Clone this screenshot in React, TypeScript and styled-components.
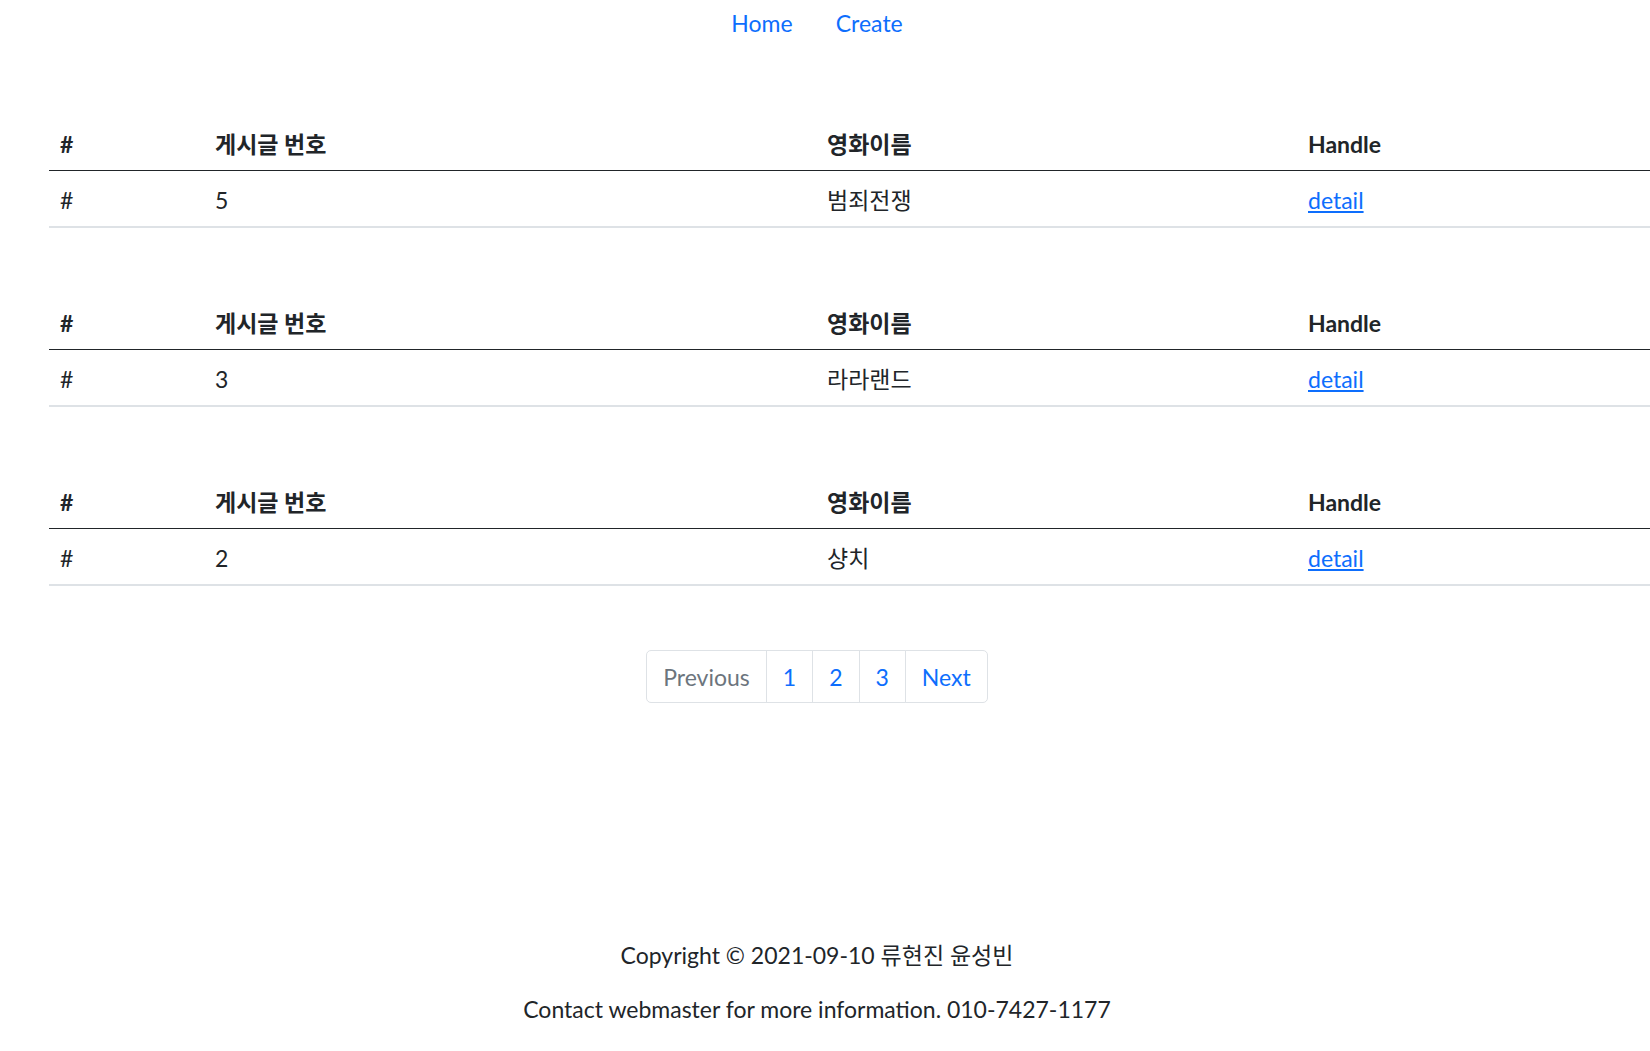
import * as React from 'react';
import styled, { createGlobalStyle } from 'styled-components';

const GlobalStyle = createGlobalStyle`
    *, *::before, *::after {
        box-sizing: border-box;
    }
    body {
        margin: 0;
        background: #fff;
        color: #212529;
        font-family: Lato, "Noto Sans CJK KR", sans-serif;
        font-size: 23px;
        overflow-x: hidden;
    }
`;

const Page = styled.div`
    display: flex;
    flex-direction: column;
    min-height: 1051px;
`;

const Nav = styled.nav`
    display: flex;
    justify-content: center;
    width: calc(100% - 16px);
`;

const NavLink = styled.a`
    padding: 7px 21.6px 11px;
    line-height: 32px;
    color: #0d6efd;
    text-decoration: none;
`;

const Board = styled.div`
    display: flex;
    flex-direction: column;
    gap: 65px;
    margin-top: 64px;
    padding-left: 49px;
`;

const Table = styled.table`
    width: 1700px;
    border-collapse: collapse;
    table-layout: fixed;
`;

const Th = styled.th<{ $w?: number }>`
    width: ${(p) => (p.$w ? `${p.$w}px` : 'auto')};
    padding: 14px 11px 10px;
    line-height: 32px;
    text-align: left;
    font-weight: 700;
    border-bottom: 1px solid #212529;
`;

const Td = styled.td`
    padding: 13px 11px 10px;
    line-height: 32px;
    border-bottom: 2px solid #dee2e6;
`;

const DetailLink = styled.a`
    color: #0d6efd;
    text-decoration: underline;
`;

const Pagination = styled.ul`
    display: flex;
    justify-content: center;
    width: calc(100% - 16px);
    margin: 64px 0 0;
    padding: 0;
    list-style: none;
`;

const PageItem = styled.li`
    & + & {
        margin-left: -1px;
    }
    &:first-child > a {
        border-radius: 5px 0 0 5px;
    }
    &:last-child > a {
        border-radius: 0 5px 5px 0;
    }
`;

const PageLink = styled.a<{ $disabled?: boolean }>`
    display: block;
    padding: 10.5px 16px;
    line-height: 30px;
    border: 1px solid #dee2e6;
    color: ${(p) => (p.$disabled ? '#6c757d' : '#0d6efd')};
    text-decoration: none;
    background: #fff;
`;

const Footer = styled.footer`
    width: calc(100% - 16px);
    margin-top: 236px;
    text-align: center;
`;

const FooterLine = styled.p`
    margin: 0 0 21.6px;
    line-height: 32.4px;
`;

interface IPost {
    id: number;
    title: string;
}

const posts: IPost[] = [
    { id: 5, title: '범죄전쟁' },
    { id: 3, title: '라라랜드' },
    { id: 2, title: '샹치' },
];

export default function App() {
    return (
        <Page>
            <GlobalStyle />
            <Nav>
                <NavLink href="#">Home</NavLink>
                <NavLink href="#">Create</NavLink>
            </Nav>
            <Board>
                {posts.map((post) => (
                    <Table key={post.id}>
                        <thead>
                            <tr>
                                <Th $w={155}>#</Th>
                                <Th $w={612}>게시글 번호</Th>
                                <Th $w={481}>영화이름</Th>
                                <Th>Handle</Th>
                            </tr>
                        </thead>
                        <tbody>
                            <tr>
                                <Td>#</Td>
                                <Td>{post.id}</Td>
                                <Td>{post.title}</Td>
                                <Td>
                                    <DetailLink href="#">detail</DetailLink>
                                </Td>
                            </tr>
                        </tbody>
                    </Table>
                ))}
            </Board>
            <Pagination>
                <PageItem><PageLink $disabled={true}>Previous</PageLink></PageItem>
                <PageItem><PageLink href="#">1</PageLink></PageItem>
                <PageItem><PageLink href="#">2</PageLink></PageItem>
                <PageItem><PageLink href="#">3</PageLink></PageItem>
                <PageItem><PageLink href="#">Next</PageLink></PageItem>
            </Pagination>
            <Footer>
                <FooterLine>Copyright © 2021-09-10 류현진 윤성빈</FooterLine>
                <FooterLine>Contact webmaster for more information. 010-7427-1177</FooterLine>
            </Footer>
        </Page>
    );
}
